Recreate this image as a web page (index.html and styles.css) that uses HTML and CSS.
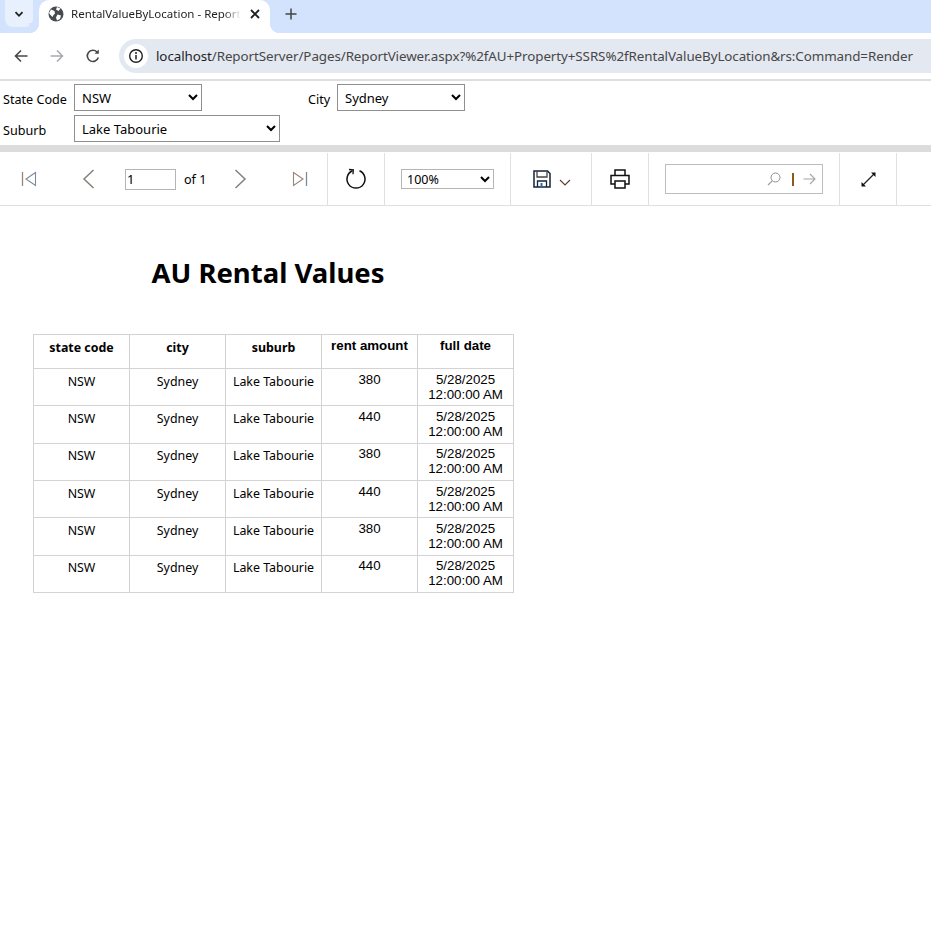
FILE: index.html
```html
<!DOCTYPE html>
<html lang="en">
    <head>
        <meta charset="UTF-8">
        <meta name="viewport" content="width=device-width, initial-scale=1.0">
        <title>RentalValueByLocation - Report Viewer</title>
        <link rel="stylesheet" href="styles.css">
    </head>
    <body>
        <header class="browser">
            <div class="tabstrip">
                <div class="tab-list">
                    <svg width="12" height="12" viewBox="0 0 12 12"><path d="M2.500 4.200 6 7.800l3.500-3.600" fill="none" stroke="#1f1f1f" stroke-width="1.800"/></svg>
                </div>
                <div class="tab">
                    <svg class="globe" width="16" height="16" viewBox="0 0 16 16">
                        <circle cx="8" cy="8" r="7.500" fill="#474b50"/>
                        <path d="M3 3.500 6.500 5 7 7.500 5.500 9 4.500 11 2 8.500 1 7zM9 1l3.500 1.500-2 2.500-2.500-1.500zM9.500 8.500l3.500 1-1 3.500-3 1.500-1-3z" fill="#fff"/>
                    </svg>
                    <span class="tab-title">RentalValueByLocation - Report</span>
                    <svg class="tab-close" width="10" height="10" viewBox="0 0 10 10"><path d="M1 1l8 8M9 1 1 9" stroke="#1f1f1f" stroke-width="1.800"/></svg>
                </div>
                <svg class="new-tab" width="12" height="12" viewBox="0 0 12 12"><path d="M6 .5v11M.5 6h11" stroke="#444" stroke-width="1.500"/></svg>
            </div>
            <div class="navbar">
                <svg class="nav-back" width="16" height="16" viewBox="0 0 16 16"><path d="M14.500 8H2.500M8 2.500 2.500 8 8 13.500" fill="none" stroke="#474747" stroke-width="1.600"/></svg>
                <svg class="nav-forward" width="16" height="16" viewBox="0 0 16 16"><path d="M1.500 8h12M8 2.500 13.500 8 8 13.500" fill="none" stroke="#a8abb0" stroke-width="1.600"/></svg>
                <svg class="nav-reload" width="16" height="16" viewBox="0 0 16 16"><path d="M13.300 9.500A5.600 5.600 0 1 1 12 4" fill="none" stroke="#474747" stroke-width="1.600"/><path d="M13.800 1.500v4.300H9.500z" fill="#474747"/></svg>
                <div class="omnibox">
                    <span class="site-info">
                        <svg width="16" height="16" viewBox="0 0 16 16"><circle cx="8" cy="8" r="6.300" fill="none" stroke="#1f1f1f" stroke-width="1.400"/><path d="M8 7v4.500" stroke="#1f1f1f" stroke-width="1.500"/><circle cx="8" cy="5" r="1" fill="#1f1f1f"/></svg>
                    </span>
                    <span class="url"><span class="host">localhost</span>/ReportServer/Pages/ReportViewer.aspx?%2fAU+Property+SSRS%2fRentalValueByLocation&amp;rs:Command=Render</span>
                </div>
            </div>
        </header>

        <form class="params">
            <label class="param-label">State Code</label>
            <select class="param-select"><option>NSW</option></select>
            <label class="param-label city-label">City</label>
            <select class="param-select"><option>Sydney</option></select>
            <label class="param-label">Suburb</label>
            <select class="param-select suburb-select"><option>Lake Tabourie</option></select>
        </form>

        <div class="report-toolbar">
            <div class="tool-group paging">
                <svg class="first-page" width="16" height="16" viewBox="0 0 16 16"><path d="M1.500 1v14" stroke="#9a8577" stroke-width="1.300"/><path d="M14.500 1.500 5 8l9.500 6.500z" fill="none" stroke="#7d8a99" stroke-width="1.100"/></svg>
                <svg class="prev-page" width="13" height="20" viewBox="0 0 13 20"><path d="M11.500 1 2 10l9.500 9" fill="none" stroke="#85807c" stroke-width="1.500"/></svg>
                <input class="page-input" type="text" value="1">
                <span class="page-count">of 1</span>
                <svg class="next-page" width="13" height="20" viewBox="0 0 13 20"><path d="M1.500 1 11 10l-9.500 9" fill="none" stroke="#85807c" stroke-width="1.500"/></svg>
                <svg class="last-page" width="16" height="16" viewBox="0 0 16 16"><path d="M14.500 1v14" stroke="#7d8a99" stroke-width="1.300"/><path d="M1.500 1.500 11 8l-9.500 6.500z" fill="none" stroke="#9a8577" stroke-width="1.100"/></svg>
            </div>
            <div class="tool-group refresh">
                <svg width="22" height="22" viewBox="0 0 22 22"><path d="M7.500 2.800A9 9 0 1 0 14.500 2.800" fill="none" stroke="#111" stroke-width="1.500"/><path d="M4 1.500 8.300 1.800 8 6.300" fill="none" stroke="#111" stroke-width="1.300"/></svg>
            </div>
            <div class="tool-group zoom">
                <select class="zoom-select"><option>100%</option></select>
            </div>
            <div class="tool-group export">
                <svg width="18" height="18" viewBox="0 0 18 18"><path d="M1 1h13.500L17 3.500V17H1z" fill="none" stroke="#14233a" stroke-width="1.500"/><path d="M4 1v6h10V1" fill="none" stroke="#444" stroke-width="1.300"/><path d="M4.500 17v-6h9v6" fill="none" stroke="#14233a" stroke-width="1.300"/><path d="M7.500 13h2v4h-2z" fill="#2a6aa5"/></svg>
                <svg class="export-caret" width="12" height="7" viewBox="0 0 12 7"><path d="M1 1l5 5 5-5" fill="none" stroke="#5c3c30" stroke-width="1.100"/></svg>
            </div>
            <div class="tool-group print">
                <svg width="20" height="20" viewBox="0 0 20 20"><path d="M5 6V1h10v5M5 15H1V6.500h18V15h-4" fill="none" stroke="#111" stroke-width="1.500"/><path d="M5 12h10v7H5z" fill="#fff" stroke="#111" stroke-width="1.500"/></svg>
            </div>
            <div class="tool-group find">
                <div class="find-box">
                    <input class="find-input" type="text">
                    <svg width="14" height="14" viewBox="0 0 14 14"><circle cx="8.500" cy="5.500" r="4.500" fill="none" stroke="#8a9099" stroke-width="1"/><path d="M5.200 8.800 1 13" stroke="#a89a8c" stroke-width="1.200"/></svg>
                    <span class="find-sep"></span>
                    <svg width="13" height="12" viewBox="0 0 13 12"><path d="M.500 6h11.500M7 1l5 5-5 5" fill="none" stroke="#a5a5a5" stroke-width="1.100"/></svg>
                </div>
            </div>
            <div class="tool-group fullscreen">
                <svg width="17" height="17" viewBox="0 0 17 17"><path d="M3 14 14 3" stroke="#222" stroke-width="1.300"/><path d="M11 1.500h4.500V6zM1.500 11v4.500H6z" fill="#111"/></svg>
            </div>
        </div>

        <main class="report">
            <h1 class="report-title">AU Rental Values</h1>
            <table class="rental-table">
                <thead>
                    <tr>
                        <th>state code</th>
                        <th>city</th>
                        <th>suburb</th>
                        <th class="arial">rent amount</th>
                        <th class="arial">full date</th>
                    </tr>
                </thead>
                <tbody>
                    <tr><td>NSW</td><td>Sydney</td><td>Lake Tabourie</td><td class="arial">380</td><td class="arial">5/28/2025<br>12:00:00 AM</td></tr>
                    <tr><td>NSW</td><td>Sydney</td><td>Lake Tabourie</td><td class="arial">440</td><td class="arial">5/28/2025<br>12:00:00 AM</td></tr>
                    <tr><td>NSW</td><td>Sydney</td><td>Lake Tabourie</td><td class="arial">380</td><td class="arial">5/28/2025<br>12:00:00 AM</td></tr>
                    <tr><td>NSW</td><td>Sydney</td><td>Lake Tabourie</td><td class="arial">440</td><td class="arial">5/28/2025<br>12:00:00 AM</td></tr>
                    <tr><td>NSW</td><td>Sydney</td><td>Lake Tabourie</td><td class="arial">380</td><td class="arial">5/28/2025<br>12:00:00 AM</td></tr>
                    <tr><td>NSW</td><td>Sydney</td><td>Lake Tabourie</td><td class="arial">440</td><td class="arial">5/28/2025<br>12:00:00 AM</td></tr>
                </tbody>
            </table>
        </main>
    </body>
</html>
```

FILE: styles.css
```css
body {
    margin: 0;
    padding: 0;
    background-color: white;
    color: black;
    font-family: "Noto Sans", "Open Sans", sans-serif;
    font-size: 13px;
    overflow: hidden;
}

/* browser chrome */
.browser {
    border-bottom: 2px solid #dedede;
    height: 79px;
}

.tabstrip {
    display: flex;
    align-items: flex-start;
    height: 33px;
    background-color: #d3e3fd;
}

.tab-list {
    display: flex;
    align-items: center;
    justify-content: center;
    width: 28px;
    height: 27px;
    margin-left: 5px;
    background-color: #e8f0fe;
    border-radius: 0 0 8px 8px;
}

.tab {
    position: relative;
    display: flex;
    align-items: center;
    width: 231px;
    height: 33px;
    margin-left: 6px;
    padding: 0 10px 6px 9px;
    box-sizing: border-box;
    background-color: white;
    border-top-left-radius: 10px;
    border-top-right-radius: 10px;
}

.tab::before,
.tab::after {
    content: "";
    position: absolute;
    bottom: 0;
    width: 10px;
    height: 10px;
}

.tab::before {
    left: -10px;
    background: radial-gradient(circle at 0 0, #d3e3fd 10px, white 10.500px);
}

.tab::after {
    right: -10px;
    background: radial-gradient(circle at 100% 0, #d3e3fd 10px, white 10.500px);
}

.globe {
    flex: none;
}

.tab-title {
    flex: none;
    margin-left: 7px;
    white-space: nowrap;
    font-size: 11.500px;
    color: #1f1f1f;
    -webkit-mask-image: linear-gradient(to right, black 90%, transparent 100%);
    mask-image: linear-gradient(to right, black 90%, transparent 100%);
}

.tab-close {
    flex: none;
    margin-left: auto;
}

.new-tab {
    margin: 8px 0 0 15px;
}

.navbar {
    display: flex;
    align-items: center;
    height: 46px;
    background-color: white;
}

.nav-back {
    margin-left: 13px;
}

.nav-forward {
    margin-left: 20px;
}

.nav-reload {
    margin-left: 20px;
}

.omnibox {
    display: flex;
    align-items: center;
    flex: 1;
    height: 34px;
    margin-left: 18px;
    background-color: #e3e8f1;
    border-radius: 17px 0 0 17px;
    white-space: nowrap;
    overflow: hidden;
}

.site-info {
    display: flex;
    align-items: center;
    justify-content: center;
    flex: none;
    width: 24px;
    height: 24px;
    margin-left: 5px;
    background-color: white;
    border-radius: 50%;
}

.url {
    margin-left: 8px;
    font-size: 13.400px;
    letter-spacing: -0.090px;
    color: #474747;
}

.host {
    color: #1f1f1f;
}

/* report parameters */
.params {
    display: grid;
    grid-template-columns: 71px 234px 29px 128px;
    grid-template-rows: 27px 27px;
    row-gap: 4px;
    align-items: center;
    height: 71px;
    padding: 3px 0 0 3px;
    box-sizing: border-box;
    border-bottom: 7px solid #dcdcdc;
}

.param-label {
    font-size: 12.600px;
    padding-top: 3px;
}

.param-select {
    width: 128px;
    height: 27px;
    padding: 0 0 0 3px;
    background-color: white;
    border: 1px solid #8f8f8f;
    border-radius: 0;
    font-family: inherit;
    font-size: 13px;
    color: black;
}

.suburb-select {
    grid-column: 2 / span 3;
    width: 206px;
}

/* viewer toolbar */
.report-toolbar {
    display: flex;
    height: 53px;
    border-bottom: 1px solid #e0e0e0;
    box-sizing: border-box;
    margin-top: 1px;
}

.tool-group {
    display: flex;
    align-items: center;
    flex: none;
    box-sizing: border-box;
    border-right: 1px solid #e0e0e0;
}

.paging {
    width: 328px;
    padding-left: 21px;
}

.prev-page {
    margin-left: 45px;
}

.page-input {
    width: 51px;
    height: 21px;
    margin-left: 30px;
    padding: 0 0 0 1px;
    box-sizing: border-box;
    border: 1px solid #b5b5b5;
    font-family: inherit;
    font-size: 13px;
    color: black;
}

.page-count {
    margin-left: 8px;
    font-size: 12.600px;
}

.next-page {
    margin-left: 28px;
}

.last-page {
    margin-left: 45px;
}

.refresh {
    justify-content: center;
    width: 57px;
}

.zoom {
    width: 126px;
    padding-left: 16px;
}

.zoom-select {
    width: 93px;
    height: 20px;
    padding: 0 0 0 1px;
    background-color: white;
    border: 1px solid #b5b5b5;
    border-radius: 0;
    font-family: inherit;
    font-size: 12.500px;
    color: black;
}

.export {
    width: 81px;
    padding-left: 22px;
}

.export-caret {
    margin: 7px 0 0 8px;
}

.print {
    justify-content: center;
    width: 57px;
}

.find {
    width: 191px;
    padding-left: 16px;
}

.find-box {
    display: flex;
    align-items: center;
    width: 158px;
    height: 30px;
    box-sizing: border-box;
    border: 1px solid #bcbcbc;
}

.find-input {
    width: 101px;
    height: 26px;
    padding: 0;
    border: none;
    outline: none;
}

.find-sep {
    width: 2px;
    height: 13px;
    margin: 0 9px 0 11px;
    background-color: #8a5a1e;
}

.fullscreen {
    justify-content: center;
    width: 57px;
}

/* report body */
.report {
    padding: 50px 0 0 33px;
}

.report-title {
    width: 470px;
    margin: 0;
    font-size: 27.500px;
    font-weight: 700;
    line-height: 34px;
    text-align: center;
}

.rental-table {
    margin-top: 44px;
    width: 481px;
    border-collapse: collapse;
    table-layout: fixed;
}

.rental-table th,
.rental-table td {
    box-sizing: border-box;
    border: 1px solid #d3d3d3;
    vertical-align: top;
    text-align: center;
    font-size: 12.400px;
    line-height: 15px;
    padding-left: 2px;
    padding-right: 2px;
}

.rental-table th {
    height: 34px;
    padding-top: 5px;
    font-weight: 700;
}

.rental-table td {
    height: 37px;
    padding-top: 5px;
}

/* the source rows are 37.33px tall, so every third row rounds up */
.rental-table tbody tr:nth-child(3n+2) td {
    height: 38px;
}

.rental-table tbody tr:nth-child(3n) td {
    padding-top: 4px;
}

.rental-table .arial {
    font-family: "Liberation Sans", Arial, sans-serif;
    font-size: 13.300px;
}

.rental-table th.arial {
    padding-top: 3px;
}

.rental-table td.arial {
    padding-top: 3px;
}

.rental-table tbody tr:nth-child(3n) td.arial {
    padding-top: 2px;
}
```
